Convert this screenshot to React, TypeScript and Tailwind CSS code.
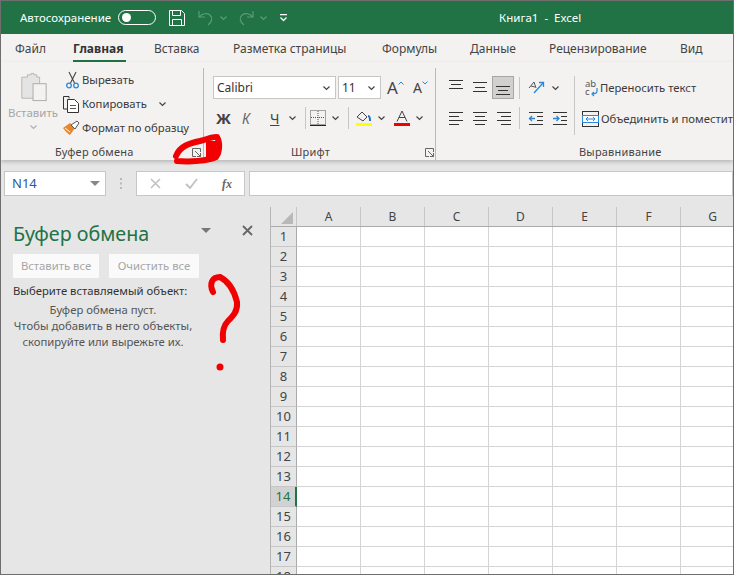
import React from 'react';

const Chev = ({ c = '#444' }: { c?: string }) => (
  <svg width="9" height="6" viewBox="0 0 9 6" className="shrink-0"><path d="M1.5 1.5 4.5 4.5 7.5 1.5" fill="none" stroke={c} strokeWidth="1.2" /></svg>
);

const Launcher = () => (
  <svg width="9" height="9" viewBox="0 0 9 9" className="shrink-0"><path d="M8.500 4V.5H.5v8H4M3 3l5.500 5.500M8.500 5v3.500H5" fill="none" stroke="#666" strokeWidth="1" /></svg>
);

const Sep = ({ h = 'h-[22px]' }: { h?: string }) => <div className={`w-px bg-[#c8c6c4] ${h}`} />;

const Lines = ({ rows }: { rows: [number, number, number][] }) => (
  <svg width="16" height="16" viewBox="0 0 16 16" className="shrink-0">
    {rows.map(([x1, x2, y]) => (
      <path key={y} d={`M${x1} ${y}.5H${x2}`} stroke="#333" strokeWidth="1" />
    ))}
  </svg>
);

const ClipboardGroup = () => (
  <div className="w-[203px] shrink-0 border-r border-[#b9b9b9] flex flex-col h-[92px]">
    <div className="h-[77px] flex">
      <div className="w-[62px] shrink-0 flex flex-col items-center pl-[2px] pt-[4px] text-[#a6a6a6]">
        <svg width="27" height="30" viewBox="0 0 28 32">
          <path d="M1.5 5.500h6V3h4V1.500h3V3h3v2.500h3V28h-19z" fill="#e4e4e4" stroke="#b5b5b5" />
          <rect x="13.500" y="12.500" width="14" height="18" fill="#f3f2f1" stroke="#a8a8a8" />
        </svg>
        <div className="text-[11.5px] leading-[16px] mt-[3px]">Вставить</div>
        <div className="mt-[3px]"><Chev c="#b0b0b0" /></div>
      </div>
      <div className="flex flex-col text-[11.3px] text-[#3b3a39]">
        <div className="h-[24px] flex items-center gap-[3px] pl-[3px]">
          <svg width="13" height="18" viewBox="0 0 13 18"><path d="M3 1l5.500 11M10 1 4.500 12" stroke="#444" strokeWidth="1.1" fill="none" /><circle cx="3" cy="14.500" r="2.300" fill="none" stroke="#2b88d8" strokeWidth="1.300" /><circle cx="10" cy="14.500" r="2.300" fill="none" stroke="#2b88d8" strokeWidth="1.300" /></svg>
          <span>Вырезать</span>
        </div>
        <div className="h-[24px] flex items-center gap-[2px]">
          <svg width="17" height="17" viewBox="0 0 17 17"><path d="M6 2.500V.5H.5V13H4" fill="none" stroke="#333" /><path d="M4.500 3.500h7l4 4v9h-11z" fill="#fff" stroke="#333" /><path d="M7 9.500h6M7 12.500h6" stroke="#555" /></svg>
          <span>Копировать</span>
          <div className="ml-[9px]"><Chev /></div>
        </div>
        <div className="h-[24px] flex items-center gap-[2px]">
          <svg width="17" height="17" viewBox="0 0 17 17"><path d="M0 8 7 3l5 5-5 7c-2-1-5-4-7-7z" fill="#e8862e" /><path d="M2 8l5 4" stroke="#fff" /><path d="M8 5l6-4 2 2-4 6z" fill="#fff" stroke="#555" /></svg>
          <span>Формат по образцу</span>
        </div>
      </div>
    </div>
    <div className="h-[15px] flex items-center text-[11px] tracking-[0.2px] text-[#444]">
      <span className="ml-[54px] w-[137px]">Буфер обмена</span>
      <Launcher />
    </div>
  </div>
);

const Combo = ({ w, label }: { w: string; label: string }) => (
  <div className={`${w} h-[23px] bg-white border border-[#c8c6c4] flex items-center justify-between pl-[3px] pr-[4px] text-[12px] text-[#333]`}>
    <span>{label}</span>
    <Chev />
  </div>
);

const Caret = ({ up }: { up: boolean }) => (
  <svg width="6" height="4" viewBox="0 0 6 4" className="shrink-0 mb-[9px]"><path d={up ? 'M.5 3.500 3 1l2.500 2.500' : 'M.5.500 3 3 5.500.5'} fill="none" stroke="#2b88d8" /></svg>
);

const FontGroup = () => (
  <div className="w-[232px] shrink-0 border-r border-[#b9b9b9] flex flex-col h-[92px] pl-[9px]">
    <div className="h-[77px] flex flex-col pt-[8px]">
      <div className="flex items-center gap-[2px]">
        <Combo w="w-[123px]" label="Calibri" />
        <Combo w="w-[43px]" label="11" />
        <div className="ml-[4px] w-[19px] flex items-center text-[17px] leading-[20px] text-[#444]">A<Caret up /></div>
        <div className="ml-[5px] w-[18px] flex items-center text-[14px] leading-[20px] text-[#444]">A<Caret up={false} /></div>
      </div>
      <div className="flex items-center h-[24px] mt-[7px] text-[#444]">
        <span className="w-[18px] ml-[3px] text-[15px] font-bold">Ж</span>
        <span className="w-[32px] pl-[8px] text-[14px] italic text-[#666]">К</span>
        <span className="w-[22px] pl-[4px] text-[14px] underline">Ч</span>
        <Chev />
        <div className="ml-[8px]"><Sep /></div>
        <svg width="16" height="16" viewBox="0 0 16 16" className="ml-[4px] shrink-0"><rect x=".5" y=".5" width="15" height="14" fill="none" stroke="#555" strokeDasharray="1 1" /><path d="M8 1v13M1 7.500h14" stroke="#555" strokeDasharray="1 1" /><path d="M0 15.500h16" stroke="#222" /></svg>
        <div className="ml-[5px]"><Chev /></div>
        <div className="ml-[8px]"><Sep /></div>
        <svg width="16" height="16" viewBox="0 0 16 16" className="ml-[7px] shrink-0"><path d="M1 7l5-5 5 5-4 4z" fill="none" stroke="#444" /><path d="M12 6c2 0 2 3 2 5" fill="none" stroke="#1b6ec2" strokeWidth="2" /><rect y="13" width="16" height="3" fill="#ffff00" /></svg>
        <div className="ml-[5px]"><Chev /></div>
        <svg width="16" height="16" viewBox="0 0 16 16" className="ml-[8px] shrink-0"><path d="M3 11.500 8 1l5 10.500M5 7.500h6" fill="none" stroke="#444" /><rect y="13" width="16" height="3" fill="#f00000" /></svg>
        <div className="ml-[5px]"><Chev /></div>
      </div>
    </div>
    <div className="h-[15px] flex items-center text-[11px] tracking-[0.2px] text-[#444]">
      <span className="ml-[78px] w-[134px]">Шрифт</span>
      <Launcher />
    </div>
  </div>
);

const AlignmentGroup = () => (
  <div className="flex-1 flex flex-col h-[92px] pl-[12px]">
    <div className="h-[77px] flex pt-[8px]">
      <div className="w-[126px] shrink-0 flex flex-col">
        <div className="flex items-center h-[23px] gap-[8px]">
          <Lines rows={[[1, 15, 0], [3, 13, 4], [1, 15, 8]]} />
          <Lines rows={[[1, 15, 2], [3, 13, 7], [1, 15, 11]]} />
          <div className="w-[22px] h-[23px] -ml-[4px] bg-[#d2d0ce] border border-[#a8a6a4] flex items-center justify-center">
            <Lines rows={[[1, 15, 6], [3, 13, 10], [1, 15, 14]]} />
          </div>
          <div className="-ml-[3px]"><Sep /></div>
          <svg width="17" height="17" viewBox="0 0 17 17" className="shrink-0"><path d="M1 9l5-6 2 6M3 7l4 1" fill="none" stroke="#555" /><path d="M6 14 15 4M11 3.500h4.500V8" fill="none" stroke="#2b88d8" strokeWidth="1.300" /></svg>
          <div className="-ml-[2px]"><Chev /></div>
        </div>
        <div className="flex items-center h-[24px] mt-[7px] gap-[8px]">
          <Lines rows={[[1, 15, 2], [1, 11, 6], [1, 15, 10], [1, 11, 14]]} />
          <Lines rows={[[1, 15, 2], [3, 13, 6], [1, 15, 10], [3, 13, 14]]} />
          <Lines rows={[[1, 15, 2], [5, 15, 6], [1, 15, 10], [5, 15, 14]]} />
          <div className="-ml-[1px]"><Sep /></div>
          <svg width="16" height="16" viewBox="0 0 16 16" className="shrink-0"><path d="M1 2.500h14M9 6.500h6M9 10.500h6M1 14.500h14" stroke="#333" /><path d="M7 8.500H1M4 6 1.500 8.500 4 11" fill="none" stroke="#2b88d8" strokeWidth="1.300" /></svg>
          <svg width="16" height="16" viewBox="0 0 16 16" className="shrink-0"><path d="M1 2.500h14M9 6.500h6M9 10.500h6M1 14.500h14" stroke="#333" /><path d="M1 8.500h6M4.500 6 7 8.500 4.500 11" fill="none" stroke="#2b88d8" strokeWidth="1.300" /></svg>
        </div>
      </div>
      <Sep h="h-[59px]" />
      <div className="flex flex-col text-[11.3px] text-[#3b3a39] whitespace-nowrap">
        <div className="h-[23px] flex items-center pl-[10px] pt-[1px] gap-[2px]">
          <svg width="13" height="16" viewBox="0 0 13 16" className="shrink-0 overflow-visible">
            <text x="0" y="7" fontSize="9.500" fill="#555">ab</text>
            <text x="0" y="15" fontSize="9.500" fill="#555">c</text>
            <path d="M12 8v3c0 2-2 3-5 3M9 12l-2 2 2 2" fill="none" stroke="#2b88d8" strokeWidth="1.200" />
          </svg>
          <span>Переносить текст</span>
        </div>
        <div className="h-[24px] flex items-center pl-[7px] gap-[2px] mt-[8px]">
          <svg width="17" height="16" viewBox="0 0 17 16" className="shrink-0"><rect x=".5" y=".5" width="16" height="15" fill="none" stroke="#333" /><rect x=".5" y="4.500" width="16" height="7" fill="#fff" stroke="#2b88d8" /><path d="M4 8h9M6 6 4 8l2 2M11 6l2 2-2 2" fill="none" stroke="#2b88d8" /></svg>
          <span>Объединить и поместить в центре</span>
        </div>
      </div>
    </div>
    <div className="h-[15px] flex items-center text-[11px] tracking-[0.2px] text-[#444]">
      <span className="ml-[131px]">Выравнивание</span>
    </div>
  </div>
);

const Pane = () => (
  <div className="w-[270px] shrink-0 border-r border-[#b5b5b5] pl-[12px] text-[#444] whitespace-nowrap">
    <div className="flex items-center h-[44px] pt-[9px]">
      <span className="text-[19.700px] text-[#217346] w-[188px]">Буфер обмена</span>
      <svg width="10" height="6" viewBox="0 0 10 6" className="mb-[6px]"><path d="M0 0h10L5 5z" fill="#777" /></svg>
      <svg width="11" height="11" viewBox="0 0 11 11" className="ml-[31px] mb-[6px]"><path d="M1 1l9 9M10 1 1 10" stroke="#666" strokeWidth="1.800" /></svg>
    </div>
    <div className="flex gap-[10px] mt-[3px] text-[11.3px] text-[#a6a6a6]">
      <div className="w-[86px] h-[24px] bg-white/80 flex items-center justify-center">Вставить все</div>
      <div className="w-[90px] h-[24px] bg-white/80 flex items-center justify-center">Очистить все</div>
    </div>
    <div className="mt-[5px] text-[11.3px] leading-[16px] text-[#333]">Выберите вставляемый объект:</div>
    <div className="w-[180px] mt-[3px] text-[11.3px] leading-[16px] text-center text-[#555]">
      Буфер обмена пуст.<br />Чтобы добавить в него объекты,<br />скопируйте или вырежьте их.
    </div>
  </div>
);

const cols = ['A', 'B', 'C', 'D', 'E', 'F', 'G'];
const rows = Array.from({ length: 18 }, (_, i) => i + 1);

const Sheet = () => (
  <div className="flex-1 overflow-hidden bg-white">
    <div className="flex h-[20px] bg-[#e6e6e6] border-b border-[#ababab] text-[12px] text-[#444]">
      <div className="w-[26px] shrink-0 border-r border-[#c6c6c6] flex items-end justify-end pr-[3px] pb-[2px]">
        <svg width="12" height="12" viewBox="0 0 12 12"><path d="M12 0v12H0z" fill="#b8b8b8" /></svg>
      </div>
      {cols.map((c) => (
        <div key={c} className="w-[64px] shrink-0 border-r border-[#c6c6c6] flex items-center justify-center">{c}</div>
      ))}
    </div>
    {rows.map((r) => (
      <div key={r} className="flex h-[20px]">
        <div className={`w-[26px] shrink-0 flex items-center justify-center pt-[1px] text-[13px] border-b border-[#c6c6c6] ${r === 14 ? 'bg-[#d2d2d2] text-[#217346] border-r-2 border-r-[#217346]' : 'bg-[#e6e6e6] text-[#444] border-r border-r-[#ababab]'}`}>
          {r}
        </div>
        {cols.map((c) => (
          <div key={c} className="w-[64px] shrink-0 border-r border-b border-[#d4d4d4]" />
        ))}
      </div>
    ))}
  </div>
);

export default function App() {
  return (
    <div className="relative w-[734px] h-[575px] overflow-hidden border border-[#6e6e6e] bg-[#e6e6e6] font-['Noto_Sans',sans-serif]">
      {/* title bar */}
      <div className="h-[33px] bg-[#217346] flex items-center text-white text-[11.500px] pl-[19px]">
        <span className="w-[91px]">Автосохранение</span>
        <div className="ml-[7px] w-[38px] h-[15px] rounded-full border border-white flex items-center pl-[3px]">
          <div className="w-[9px] h-[9px] rounded-full bg-white" />
        </div>
        <svg width="16" height="16" viewBox="0 0 16 16" className="ml-[13px]"><path d="M.5.500h12l3 3v12H.5z" fill="none" stroke="#fff" /><path d="M3.500.5v5h8v-5M3.500 15.500v-6h9v6" fill="none" stroke="#fff" /></svg>
        <svg width="16" height="16" viewBox="0 0 16 16" className="ml-[13px]"><path d="M1 1v6h6M1.500 7C4 3 9 3 12 5c3 3 2 7-2 10" fill="none" stroke="#5a9a78" strokeWidth="1.200" /></svg>
        <div className="ml-[5px]"><Chev c="#5a9a78" /></div>
        <svg width="16" height="16" viewBox="0 0 16 16" className="ml-[10px]"><path d="M15 1v6H9M14.500 7C12 3 7 3 4 5c-3 3-2 7 2 10" fill="none" stroke="#5a9a78" strokeWidth="1.200" /></svg>
        <div className="ml-[5px]"><Chev c="#5a9a78" /></div>
        <svg width="9" height="8" viewBox="0 0 9 8" className="ml-[11px]"><path d="M1 .5h7M1.500 3.500l3 3 3-3" fill="none" stroke="#fff" strokeWidth="1.300" /></svg>
        <span className="ml-[211px]">Книга1&nbsp; -&nbsp; Excel</span>
      </div>

      {/* tabs */}
      <div className="h-[28px] bg-[#f3f2f1] flex items-center pt-[2px] text-[12px] text-[#444] whitespace-nowrap pl-[14px]">
        <span className="w-[29px]">Файл</span>
        <span className="relative w-[53px] ml-[29px] font-bold text-[#333]">
          Главная
          <span className="absolute left-0 right-0 -bottom-[4px] h-[2px] bg-[#217346]" />
        </span>
        <span className="w-[45px] ml-[28px]">Вставка</span>
        <span className="w-[114px] ml-[34px]">Разметка страницы</span>
        <span className="w-[56px] ml-[35px]">Формулы</span>
        <span className="w-[45px] ml-[32px]">Данные</span>
        <span className="w-[98px] ml-[34px]">Рецензирование</span>
        <span className="ml-[33px]">Вид</span>
      </div>

      {/* ribbon */}
      <div className="relative z-10 h-[98px] bg-[#f3f2f1] flex pt-[6px] shadow-[0_2px_4px_rgba(0,0,0,0.2)]">
        <ClipboardGroup />
        <FontGroup />
        <AlignmentGroup />
      </div>

      {/* formula bar */}
      <div className="h-[47px] flex items-center pl-[3px] text-[13px]">
        <div className="w-[102px] h-[25px] bg-white border border-[#c6c6c6] flex items-center justify-between pl-[7px] pr-[5px] text-[#2b579a]">
          <span>N14</span>
          <svg width="10" height="5" viewBox="0 0 10 5"><path d="M0 0h10L5 5z" fill="#888" /></svg>
        </div>
        <div className="w-[30px] flex justify-center text-[#aaa] leading-none">
          <svg width="3" height="11" viewBox="0 0 3 11"><path d="M1 0v2M1 4.500v2M1 9v2" stroke="#aaa" strokeWidth="1.500" /></svg>
        </div>
        <div className="w-[109px] h-[25px] bg-white border border-[#c6c6c6] flex items-center pl-[13px] gap-[24px]">
          <svg width="11" height="11" viewBox="0 0 11 11"><path d="M1 1l9 9M10 1 1 10" stroke="#c0c0c0" strokeWidth="1.500" /></svg>
          <svg width="13" height="11" viewBox="0 0 13 11"><path d="M1 6l4 4 7-9" fill="none" stroke="#c0c0c0" strokeWidth="1.800" /></svg>
          <span className="font-['Liberation_Serif',serif] italic font-bold text-[12px] text-[#666]">fx</span>
        </div>
        <div className="flex-1 h-[25px] ml-[4px] bg-white border border-[#c6c6c6]" />
      </div>

      {/* work area */}
      <div className="flex h-[367px]">
        <Pane />
        <Sheet />
      </div>

      {/* red marker scribbles */}
      <svg width="734" height="575" viewBox="0 0 734 575" className="absolute -left-px -top-px z-20 pointer-events-none">
        <path d="M176 156C180 146 190 143 200 141 208 139 214 136 217 137 220 142 220 152 216 157 208 161 190 162 177 161" fill="none" stroke="#f00000" strokeWidth="6" strokeLinecap="round" />
        <path d="M206 141h10v17h-10z" fill="#f00000" />
        <path d="M213 292C209 284 212 277 220 277 228 281 234 290 237 302 238 311 233 316 228 321 224 325 222 330 223 340" fill="none" stroke="#f00000" strokeWidth="6" strokeLinecap="round" />
        <circle cx="220" cy="367" r="3.500" fill="#f00000" />
      </svg>
    </div>
  );
}
